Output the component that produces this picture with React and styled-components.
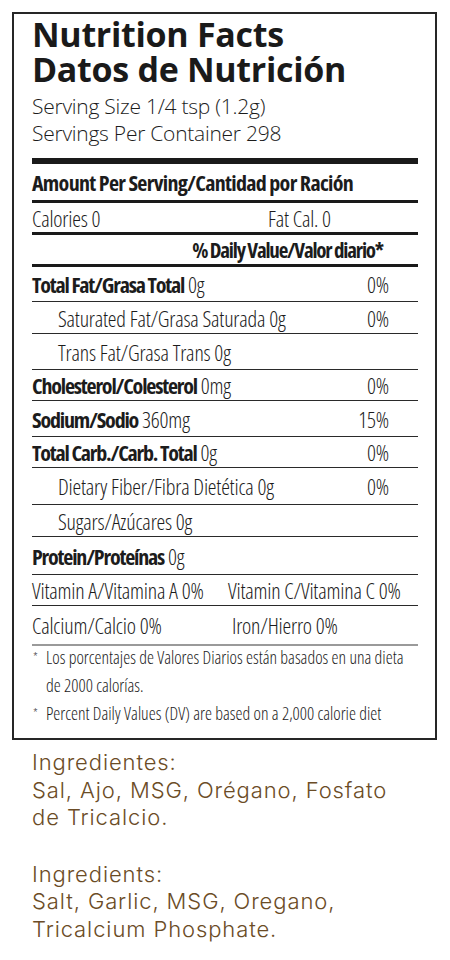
import React from 'react';
import styled, { createGlobalStyle } from 'styled-components';

const Global = createGlobalStyle`
    body {
        margin: 0;
        background: #fff;
        color: #1c1c1c;
    }
`;

const Page = styled.main`
    width: 450px;
    padding: 12px 0 0 12px;
    box-sizing: border-box;
`;

const Label = styled.section`
    width: 425px;
    box-sizing: border-box;
    border: 2px solid #262626;
    padding: 3px 17px 0 18px;
    font-family: "Open Sans", sans-serif;
    font-weight: 300;
    font-stretch: 75%;

    h1 {
        margin: 0;
        font-weight: 700;
        font-stretch: 100%;
        font-size: 34px;
        line-height: 35px;
        letter-spacing: -0.3px;
        color: #1a1a1a;
    }
`;

const Serving = styled.div`
    font-size: 21px;
    line-height: 27px;
    font-stretch: 100%;
    letter-spacing: -0.25px;
    margin-top: 6px;

    p {
        margin: 0;
    }
`;

const Bar = styled.div`
    height: 6px;
    background: #1a1a1a;
    margin-top: 11px;
`;

const Row = styled.div`
    display: flex;
    align-items: center;
    height: ${p => p.h || 33}px;
    padding-left: ${p => (p.indent ? 26 : 0)}px;
    padding-right: ${p => (p.right ? 35 : 0)}px;
    justify-content: ${p => (p.right ? 'flex-end' : 'flex-start')};
    border-bottom: ${p => p.line || 1}px solid ${p => p.color || '#2a2a2a'};
    font-size: 22px;
    letter-spacing: -0.2px;
    white-space: nowrap;
`;

const Strong = styled.b`
    font-weight: 700;
    font-size: ${p => p.size || 22}px;
    letter-spacing: ${p => p.track ?? -1.2}px;
`;

const Name = styled.span`
    flex: 1;
`;

const Pct = styled.span`
    width: 60px;
    text-align: right;
    margin-right: 29px;
`;

const Col = styled.span`
    width: ${p => p.w}px;
`;

const Notes = styled.div`
    margin-top: -3px;
    padding: 0 0 11px 1px;
    font-size: 17.7px;
    line-height: 28px;
`;

const Note = styled.div`
    display: grid;
    grid-template-columns: 13px 1fr;

    span:first-child {
        font-size: 13px;
    }
`;

const Ingredients = styled.section`
    padding: 9px 0 0 20px;
    font-family: Inter, "Open Sans", sans-serif;
    font-weight: 350;
    font-size: 22px;
    line-height: 27.5px;
    letter-spacing: 0.9px;
    color: #6b4c26;

    p {
        margin: 0 0 29px;
    }
`;

const nutrients = [
    { bold: 'Total Fat/Grasa Total', text: '0g', pct: '0%', h: 34 },
    { text: 'Saturated Fat/Grasa Saturada 0g', pct: '0%', indent: true, h: 31 },
    { text: 'Trans Fat/Grasa Trans 0g', indent: true, h: 35 },
    { bold: 'Cholesterol/Colesterol', text: '0mg', pct: '0%', h: 30 },
    { bold: 'Sodium/Sodio', text: '360mg', pct: '15%', h: 35 },
    { bold: 'Total Carb./Carb. Total', text: '0g', pct: '0%', h: 30 },
    { text: 'Dietary Fiber/Fibra Dietética 0g', pct: '0%', indent: true, h: 36 },
    { text: 'Sugars/Azúcares 0g', indent: true, h: 31 },
    { bold: 'Protein/Proteínas', text: '0g', h: 37 },
];

const App = () => (
    <Page>
        <Global />
        <Label>
            <h1>Nutrition Facts<br />Datos de Nutrición</h1>
            <Serving>
                <p>Serving Size 1/4 tsp (1.2g)</p>
                <p>Servings Per Container 298</p>
            </Serving>
            <Bar />
            <Row h={36} line={3} color="#1a1a1a">
                <Strong track={-0.7}>Amount Per Serving/Cantidad por Ración</Strong>
            </Row>
            <Row h={29} line={3} color="#1a1a1a">
                <Col w={236}>Calories 0</Col>
                <span>Fat Cal. 0</span>
            </Row>
            <Row h={29} line={3} color="#1a1a1a" right>
                <Strong size={21} track={-1.2}>% Daily Value/Valor diario*</Strong>
            </Row>
            {nutrients.map(n => (
                <Row key={n.bold || n.text} h={n.h} indent={n.indent}>
                    <Name>
                        {n.bold && <Strong>{n.bold}</Strong>}
                        {n.bold && ' '}
                        {n.text}
                    </Name>
                    {n.pct && <Pct>{n.pct}</Pct>}
                </Row>
            ))}
            <Row h={30}>
                <Col w={196}>Vitamin A/Vitamina A 0%</Col>
                <span>Vitamin C/Vitamina C 0%</span>
            </Row>
            <Row h={38} line={2} color="#9a9a9a">
                <Col w={200}>Calcium/Calcio 0%</Col>
                <span>Iron/Hierro 0%</span>
            </Row>
            <Notes>
                <Note>
                    <span>*</span>
                    <span>Los porcentajes de Valores Diarios están basados en una dieta<br />de 2000 calorías.</span>
                </Note>
                <Note>
                    <span>*</span>
                    <span>Percent Daily Values (DV) are based on a 2,000 calorie diet</span>
                </Note>
            </Notes>
        </Label>
        <Ingredients>
            <p>Ingredientes:<br />Sal, Ajo, MSG, Orégano, Fosfato<br />de Tricalcio.</p>
            <p>Ingredients:<br />Salt, Garlic, MSG, Oregano,<br />Tricalcium Phosphate.</p>
        </Ingredients>
    </Page>
);

export default App;
